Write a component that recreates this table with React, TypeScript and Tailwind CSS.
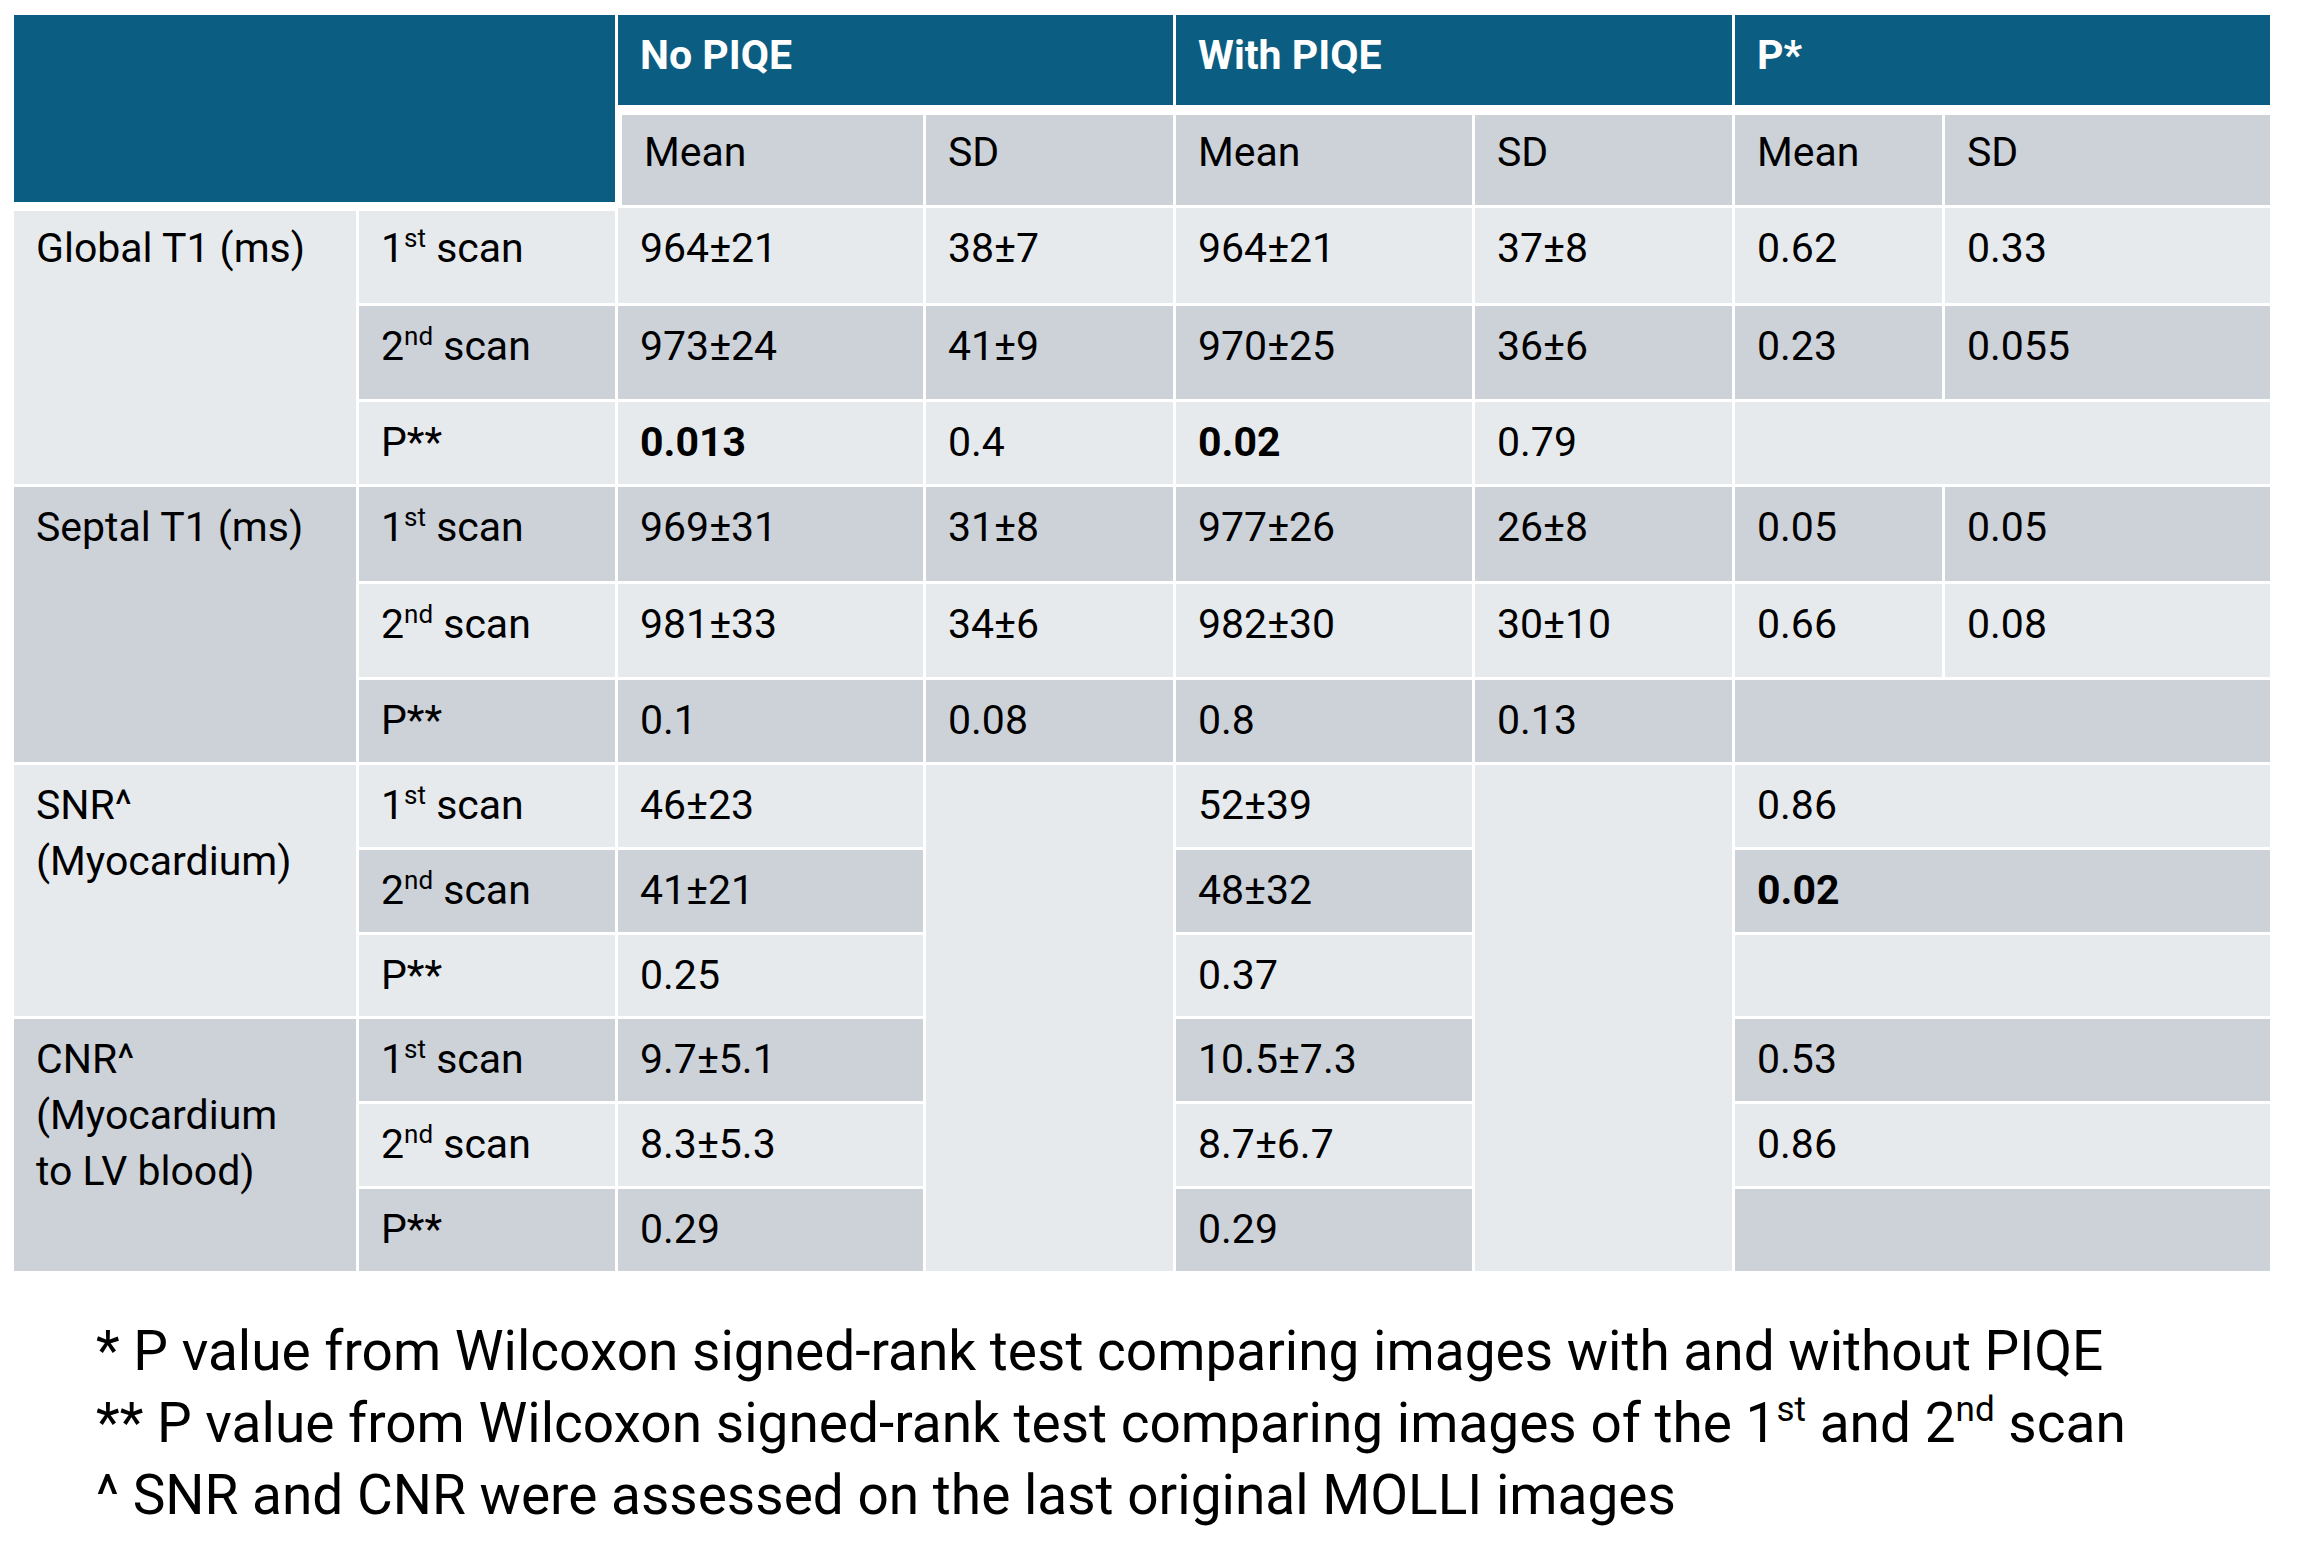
import React from 'react';

type Tone = 'light' | 'dark' | 'blue';

const toneClass: Record<Tone, string> = {
  light: 'bg-[#e7eaed] text-black',
  dark: 'bg-[#cdd2d9] text-black',
  blue: 'bg-[#0b5e82] text-white font-bold',
};

const Cell: React.FC<{ tone: Tone; className?: string; bold?: boolean; children?: React.ReactNode }> = ({
  tone,
  className = '',
  bold,
  children,
}) => (
  <div className={`${toneClass[tone]} pl-[22px] text-[41px] leading-[56px] ${bold ? 'font-bold' : ''} ${className || 'pt-[12px]'}`}>
    {children}
  </div>
);

const Ord: React.FC<{ n: string; s: string }> = ({ n, s }) => (
  <>
    {n}
    <sup className="text-[26px] top-[-15px]">{s}</sup>
  </>
);

const App: React.FC = () => {
  return (
    <div className="w-[2310px] h-[1547px] bg-white pl-[14px] pt-[15px] font-['Roboto',sans-serif] text-black">
      <div className="grid grid-cols-[342px_256px_305px_247px_296px_257px_207px_325px] grid-rows-[90px_97px_95px_93px_82px_94px_93px_82px_82px_82px_81px_82px_82px_82px] gap-[3px] w-[2256px]">
        {/* header */}
        <div className="col-span-2 row-span-2 bg-[#0b5e82] mb-[3px]" />
        <Cell tone="blue" className="col-span-2 pt-[12px]">No PIQE</Cell>
        <Cell tone="blue" className="col-span-2 pt-[12px]">With PIQE</Cell>
        <Cell tone="blue" className="col-span-2 pt-[12px]">P*</Cell>

        <Cell tone="dark" className="mt-[7px] ml-[4px] pt-[9px]">Mean</Cell>
        <Cell tone="dark" className="mt-[7px] pt-[9px]">SD</Cell>
        <Cell tone="dark" className="mt-[7px] pt-[9px]">Mean</Cell>
        <Cell tone="dark" className="mt-[7px] pt-[9px]">SD</Cell>
        <Cell tone="dark" className="mt-[7px] pt-[9px]">Mean</Cell>
        <Cell tone="dark" className="mt-[7px] pt-[9px]">SD</Cell>

        {/* Global T1 */}
        <Cell tone="light" className="row-span-3 mt-[3px] pt-[9px]">Global T1 (ms)</Cell>
        <Cell tone="light" className="mt-[3px] pt-[9px]"><Ord n="1" s="st" /> scan</Cell>
        <Cell tone="light">964±21</Cell>
        <Cell tone="light">38±7</Cell>
        <Cell tone="light">964±21</Cell>
        <Cell tone="light">37±8</Cell>
        <Cell tone="light">0.62</Cell>
        <Cell tone="light">0.33</Cell>

        <Cell tone="dark"><Ord n="2" s="nd" /> scan</Cell>
        <Cell tone="dark">973±24</Cell>
        <Cell tone="dark">41±9</Cell>
        <Cell tone="dark">970±25</Cell>
        <Cell tone="dark">36±6</Cell>
        <Cell tone="dark">0.23</Cell>
        <Cell tone="dark">0.055</Cell>

        <Cell tone="light">P**</Cell>
        <Cell tone="light" bold>0.013</Cell>
        <Cell tone="light">0.4</Cell>
        <Cell tone="light" bold>0.02</Cell>
        <Cell tone="light">0.79</Cell>
        <Cell tone="light" className="col-span-2" />

        {/* Septal T1 */}
        <Cell tone="dark" className="row-span-3 pt-[12px]">Septal T1 (ms)</Cell>
        <Cell tone="dark"><Ord n="1" s="st" /> scan</Cell>
        <Cell tone="dark">969±31</Cell>
        <Cell tone="dark">31±8</Cell>
        <Cell tone="dark">977±26</Cell>
        <Cell tone="dark">26±8</Cell>
        <Cell tone="dark">0.05</Cell>
        <Cell tone="dark">0.05</Cell>

        <Cell tone="light"><Ord n="2" s="nd" /> scan</Cell>
        <Cell tone="light">981±33</Cell>
        <Cell tone="light">34±6</Cell>
        <Cell tone="light">982±30</Cell>
        <Cell tone="light">30±10</Cell>
        <Cell tone="light">0.66</Cell>
        <Cell tone="light">0.08</Cell>

        <Cell tone="dark">P**</Cell>
        <Cell tone="dark">0.1</Cell>
        <Cell tone="dark">0.08</Cell>
        <Cell tone="dark">0.8</Cell>
        <Cell tone="dark">0.13</Cell>
        <Cell tone="dark" className="col-span-2" />

        {/* SNR */}
        <Cell tone="light" className="row-span-3 pt-[12px]">SNR^<br />(Myocardium)</Cell>
        <Cell tone="light"><Ord n="1" s="st" /> scan</Cell>
        <Cell tone="light">46±23</Cell>
        <Cell tone="light" className="row-span-6" />
        <Cell tone="light">52±39</Cell>
        <Cell tone="light" className="row-span-6" />
        <Cell tone="light" className="col-span-2 pt-[12px]">0.86</Cell>

        <Cell tone="dark"><Ord n="2" s="nd" /> scan</Cell>
        <Cell tone="dark">41±21</Cell>
        <Cell tone="dark">48±32</Cell>
        <Cell tone="dark" className="col-span-2 pt-[12px]" bold>0.02</Cell>

        <Cell tone="light">P**</Cell>
        <Cell tone="light">0.25</Cell>
        <Cell tone="light">0.37</Cell>
        <Cell tone="light" className="col-span-2" />

        {/* CNR */}
        <Cell tone="dark" className="row-span-3 pt-[12px]">CNR^<br />(Myocardium<br />to LV blood)</Cell>
        <Cell tone="dark"><Ord n="1" s="st" /> scan</Cell>
        <Cell tone="dark">9.7±5.1</Cell>
        <Cell tone="dark">10.5±7.3</Cell>
        <Cell tone="dark" className="col-span-2 pt-[12px]">0.53</Cell>

        <Cell tone="light"><Ord n="2" s="nd" /> scan</Cell>
        <Cell tone="light">8.3±5.3</Cell>
        <Cell tone="light">8.7±6.7</Cell>
        <Cell tone="light" className="col-span-2 pt-[12px]">0.86</Cell>

        <Cell tone="dark">P**</Cell>
        <Cell tone="dark">0.29</Cell>
        <Cell tone="dark">0.29</Cell>
        <Cell tone="dark" className="col-span-2" />
      </div>

      <div className="mt-[44px] ml-[82px] text-[55px] leading-[72px]">
        <p>* P value from Wilcoxon signed-rank test comparing images with and without PIQE</p>
        <p>
          ** P value from Wilcoxon signed-rank test comparing images of the 1
          <sup className="text-[35px] top-[-21px]">st</sup> and 2<sup className="text-[35px] top-[-21px]">nd</sup> scan
        </p>
        <p>^ SNR and CNR were assessed on the last original MOLLI images</p>
      </div>
    </div>
  );
};

export default App;
